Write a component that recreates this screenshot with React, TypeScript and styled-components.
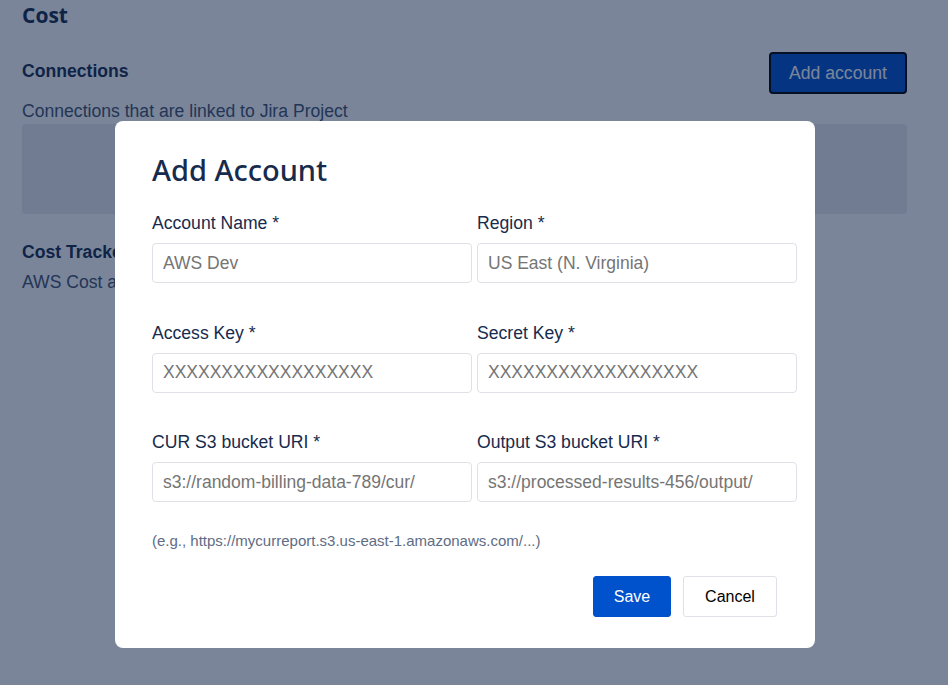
import React from "react";
import styled, { createGlobalStyle } from "styled-components";

const Global = createGlobalStyle`
  html, body { margin: 0; padding: 0; background: #ffffff; }
  body { font-family: "Liberation Sans", Arial, sans-serif; color: #172B4D; }
  * { box-sizing: border-box; }
`;

const Page = styled.div`
  padding: 0 41px 0 22px;
  height: 685px;
  overflow: hidden;
`;

const PageTitle = styled.h1`
  margin: 0;
  padding-top: 1px;
  font-family: "Open Sans", "Noto Sans", sans-serif;
  font-weight: 700;
  font-size: 21px;
  line-height: 28px;
  color: #172B4D;
`;

const SectionRow = styled.div`
  display: flex;
  justify-content: space-between;
  align-items: center;
  margin-top: 23px;
`;

const SectionTitle = styled.h2<{ $top?: number; $lift?: number }>`
  margin: ${(p) => p.$top ?? 0}px 0 0;
  padding-bottom: ${(p) => p.$lift ?? 0}px;
  font-size: 17.6px;
  font-weight: 700;
  line-height: 22px;
  color: #172B4D;
`;

const PrimaryOutlined = styled.button`
  width: 138px;
  height: 42px;
  border: 2px solid #000000;
  border-radius: 4px;
  background: #0052CC;
  color: #ffffff;
  font-family: "Liberation Sans", Arial, sans-serif;
  font-size: 17.6px;
`;

const Description = styled.p<{ $top: number }>`
  margin: ${(p) => p.$top}px 0 0;
  font-size: 17.6px;
  line-height: 22px;
  color: #42526E;
`;

const EmptyCard = styled.div`
  margin-top: 2px;
  height: 90px;
  border-radius: 4px;
  background: #EBECF0;
`;

const Blanket = styled.div`
  position: fixed;
  inset: 0;
  background: rgba(9, 30, 66, 0.54);
  display: flex;
  align-items: flex-start;
  justify-content: flex-start;
  padding: 121px 0 0 115px;
`;

const Modal = styled.div`
  width: 700px;
  height: 527px;
  background: #ffffff;
  border-radius: 8px;
  padding: 29px 38px 0 37px;
  display: flex;
  flex-direction: column;
`;

const ModalTitle = styled.h2`
  margin: 0;
  font-family: "Noto Sans", "Open Sans", sans-serif;
  font-weight: 500;
  font-size: 29px;
  line-height: 40px;
  color: #172B4D;
`;

const FieldGrid = styled.div`
  display: grid;
  grid-template-columns: 320px 320px;
  column-gap: 5px;
  row-gap: 39.5px;
  margin-top: 23px;
`;

const Field = styled.div`
  display: flex;
  flex-direction: column;
`;

const Label = styled.label`
  font-size: 17.6px;
  line-height: 20px;
  color: #172B4D;
  margin-bottom: 10px;
`;

const Input = styled.input`
  height: 40px;
  width: 100%;
  border: 1px solid #DFE1E6;
  border-radius: 4px;
  padding: 0 10px;
  font-family: "Liberation Sans", Arial, sans-serif;
  font-size: 17.5px;
  color: #172B4D;
  background: #ffffff;
  outline: none;
  &::placeholder { color: #757575; }
`;

const Hint = styled.div`
  margin-top: 30px;
  font-size: 15px;
  line-height: 18px;
  color: #5E6C84;
`;

const Actions = styled.div`
  display: flex;
  justify-content: flex-end;
  gap: 12px;
  margin-top: 26px;
`;

const ActionButton = styled.button<{ $primary?: boolean }>`
  height: 41px;
  width: ${(p) => (p.$primary ? 78 : 94)}px;
  border-radius: 3px;
  border: 1px solid ${(p) => (p.$primary ? "#0052CC" : "#DFE1E6")};
  background: ${(p) => (p.$primary ? "#0052CC" : "#ffffff")};
  color: ${(p) => (p.$primary ? "#ffffff" : "#000000")};
  font-family: "Liberation Sans", Arial, sans-serif;
  font-size: 16px;
`;

const fields = [
  { label: "Account Name *", placeholder: "AWS Dev" },
  { label: "Region *", placeholder: "US East (N. Virginia)" },
  { label: "Access Key *", placeholder: "XXXXXXXXXXXXXXXXXX" },
  { label: "Secret Key *", placeholder: "XXXXXXXXXXXXXXXXXX" },
  { label: "CUR S3 bucket URI *", placeholder: "s3://random-billing-data-789/cur/" },
  { label: "Output S3 bucket URI *", placeholder: "s3://processed-results-456/output/" },
];

export default function App() {
  return (
    <>
      <Global />
      <Page>
        <PageTitle>Cost</PageTitle>
        <SectionRow>
          <SectionTitle $lift={4}>Connections</SectionTitle>
          <PrimaryOutlined>Add account</PrimaryOutlined>
        </SectionRow>
        <Description $top={6}>Connections that are linked to Jira Project</Description>
        <EmptyCard />
        <SectionTitle $top={27}>Cost Tracker</SectionTitle>
        <Description $top={8}>AWS Cost and usage tracking</Description>
      </Page>
      <Blanket>
        <Modal>
          <ModalTitle>Add Account</ModalTitle>
          <FieldGrid>
            {fields.map((f) => (
              <Field key={f.label}>
                <Label>{f.label}</Label>
                <Input placeholder={f.placeholder} />
              </Field>
            ))}
          </FieldGrid>
          <Hint>(e.g., https://mycurreport.s3.us-east-1.amazonaws.com/...)</Hint>
          <Actions>
            <ActionButton $primary>Save</ActionButton>
            <ActionButton>Cancel</ActionButton>
          </Actions>
        </Modal>
      </Blanket>
    </>
  );
}
